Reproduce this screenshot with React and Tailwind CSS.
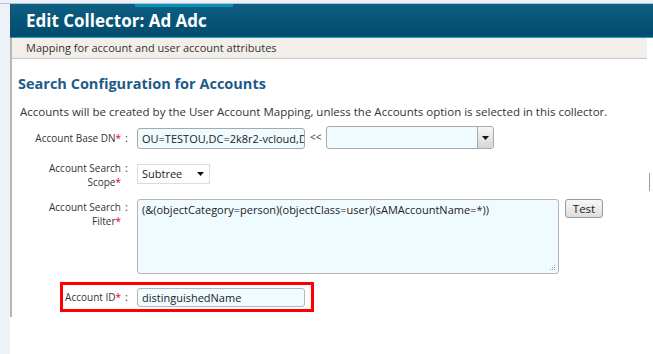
import React from 'react';

const Req = () => <span className="text-[#e00000]">*</span>;

const Caret = ({ className = '' }) => (
    <svg width="7" height="4" viewBox="0 0 7 4" className={className}>
        <path d="M0 0h7L3.5 4z" fill="#111" />
    </svg>
);

const FieldRow = ({ label, second, className = '', children }) => (
    <div className={`flex ${className}`}>
        <div className="w-[109px] text-right text-[10px] leading-[14px] text-[#333]">
            {second ? (
                <>
                    <div>{label}</div>
                    <div>{second}<Req /></div>
                </>
            ) : (
                <div>{label}<Req /></div>
            )}
        </div>
        <div className="w-[16px] pl-[4px] text-[11px] leading-[14px] text-[#333]">:</div>
        {children}
    </div>
);

export default function App() {
    return (
        <div className="relative w-[653px] h-[354px] overflow-hidden bg-[#edf2f9] flex flex-col" style={{ fontFamily: '"Open Sans", "Liberation Sans", sans-serif' }}>
            <div className="h-[4px] shrink-0 border-b border-[#b3c1d4]" />

            <div className="flex flex-1">
                <div className="w-[10px] shrink-0" />

                <div className="flex-1 flex flex-col bg-white">
                    {/* Title bar */}
                    <div className="relative h-[34px] shrink-0 border-l border-[#27475a] border-b border-b-[#22a4bf] bg-gradient-to-b from-[#0f5f83] to-[#004c6e] flex items-center pl-[15px]">
                        <div className="absolute top-0 left-[124px] w-[98px] h-[3px] bg-[#0b8fb2]" />
                        <h1 className="text-[17px] font-bold text-white">Edit Collector: Ad Adc</h1>
                    </div>

                    {/* Sub header */}
                    <div className="h-[21px] shrink-0 border-l-2 border-[#bcb5ad] border-b border-b-[#cbc7c2] bg-[#f2efea] flex items-center pl-[14px] text-[11px] text-[#333] mr-[6px]">
                        Mapping for account and user account attributes
                    </div>

                    {/* Form body */}
                    <div className="border-l-2 border-[#bcb5ad] pb-[5px]">
                        <h2 className="mt-[15px] pl-[6px] text-[14.5px] leading-[20px] font-bold text-[#1d5b88]">
                            Search Configuration for Accounts
                        </h2>
                        <p className="mt-[10px] pl-[8px] text-[11.5px] leading-[16px] text-[#333]">
                            Accounts will be created by the User Account Mapping, unless the Accounts option is selected in this collector.
                        </p>

                        <FieldRow label="Account Base DN" className="mt-[6px] items-center h-[23px]">
                            <div className="w-[168px] h-[21px] mt-[2px] rounded-[3px] border border-[#a9a9a9] bg-[#f0fbff] px-[4px] text-[11px] leading-[19px] text-[#222] overflow-hidden whitespace-nowrap">
                                OU=TESTOU,DC=2k8r2-vcloud,DC=local
                            </div>
                            <span className="ml-[5px] mr-[5px] text-[10px] text-[#333]">&lt;&lt;</span>
                            <div className="w-[168px] h-[23px] flex rounded-[3px] border border-[#a9a9a9] bg-[#f0fbff] overflow-hidden">
                                <div className="flex-1" />
                                <div className="w-[16px] border-l border-[#a9a9a9] bg-gradient-to-b from-[#f6f6f6] to-[#d6d6d6] flex items-center justify-center">
                                    <Caret />
                                </div>
                            </div>
                        </FieldRow>

                        <FieldRow label="Account Search" second="Scope" className="mt-[12px]">
                            <div className="mt-[3px] w-[73px] h-[20px] border border-[#dcdcdc] bg-white flex items-center justify-between pl-[4px] pr-[5px] text-[11px] text-[#222]">
                                <span>Subtree</span>
                                <Caret />
                            </div>
                        </FieldRow>

                        <FieldRow label="Account Search" second="Filter" className="mt-[11px]">
                            <div className="relative -mt-[1px] w-[422px] h-[75px] rounded-[3px] border border-[#b5b5b5] bg-[#f0fbff] px-[4px] pt-[2px] text-[11px] leading-[16px] text-[#222]">
                                (&amp;(objectCategory=person)(objectClass=user)(sAMAccountName=*))
                                <svg width="7" height="7" viewBox="0 0 7 7" className="absolute right-[2px] bottom-[2px]">
                                    <g fill="#9a9a9a">
                                        <rect x="5" y="1" width="1" height="1" />
                                        <rect x="3" y="3" width="1" height="1" />
                                        <rect x="5" y="3" width="1" height="1" />
                                        <rect x="1" y="5" width="1" height="1" />
                                        <rect x="3" y="5" width="1" height="1" />
                                        <rect x="5" y="5" width="1" height="1" />
                                    </g>
                                </svg>
                            </div>
                            <button className="ml-[6px] -mt-[1px] w-[38px] h-[19px] rounded-[3px] border border-[#9a9a9a] bg-gradient-to-b from-[#f7f7f7] to-[#dedede] text-[11.5px] leading-[16px] text-[#222]">
                                Test
                            </button>
                        </FieldRow>

                        <div className="mt-[8px] ml-[48px] w-[254px] h-[30px] border-[3px] border-[#ff0000] flex items-center">
                            <div className="w-[58px] text-right text-[10px] leading-[14px] text-[#333] whitespace-nowrap">
                                Account ID<Req />
                            </div>
                            <div className="w-[16px] pl-[4px] text-[11px] leading-[14px] text-[#333]">:</div>
                            <div className="w-[168px] h-[19px] rounded-[3px] border border-[#b5b5b5] bg-[#f0fbff] px-[4px] text-[11px] leading-[17px] text-[#222]">
                                distinguishedName
                            </div>
                        </div>
                    </div>
                    <div className="flex-1" />
                </div>
            </div>

            {/* scrollbar fragment */}
            <div className="absolute left-[649px] top-[173px] w-[1px] h-[18px] bg-[#9c9c9c]" />
        </div>
    );
}
